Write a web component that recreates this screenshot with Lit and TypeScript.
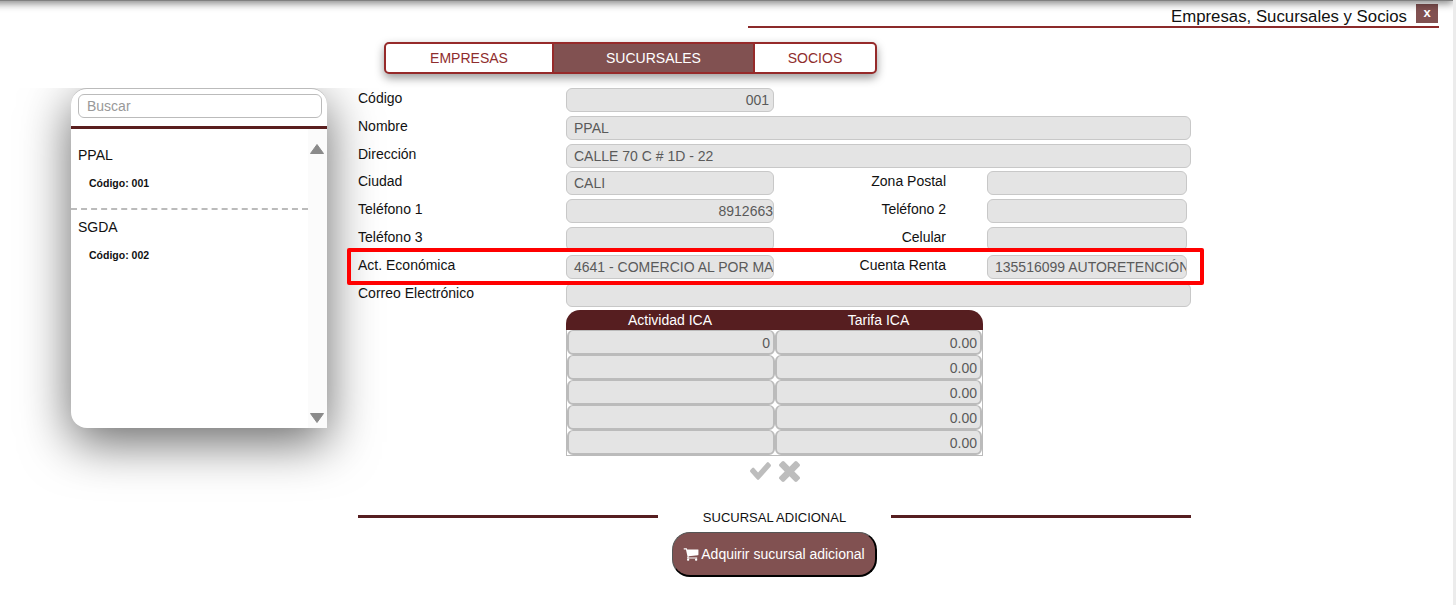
import { LitElement, html, css, svg } from "lit";
import { customElement } from "lit/decorators.js";

const CHECK = "M1671 566q0 40-28 68l-724 724-136 136q-28 28-68 28t-68-28l-136-136-362-362q-28-28-28-68t28-68l136-136q28-28 68-28t68 28l294 295 656-657q28-28 68-28t68 28l136 136q28 28 28 68z";
const TIMES = "M1298 1202q0 40-28 68l-136 136q-28 28-68 28t-68-28l-294-294-294 294q-28 28-68 28t-68-28l-136-136q-28-28-28-68t28-68l294-294-294-294q-28-28-28-68t28-68l136-136q28-28 68-28t68 28l294 294 294-294q28-28 68-28t68 28l136 136q28 28 28 68t-28 68l-294 294 294 294q28 28 28 68z";
const CART = "M704 1536q0 52-38 90t-90 38-90-38-38-90 38-90 90-38 90 38 38 90zm896 0q0 52-38 90t-90 38-90-38-38-90 38-90 90-38 90 38 38 90zm128-1088v512q0 24-16.5 42.5t-40.5 21.5l-1044 122q13 60 13 70 0 16-24 64h920q26 0 45 19t19 45-19 45-45 19h-1024q-26 0-45-19t-19-45q0-11 8-31.5t16-36 21.5-40 15.5-29.5l-177-823h-204q-26 0-45-19t-19-45 19-45 45-19h256q16 0 28.5 6.5t19.5 15.5 13 24.5 8 26 5.5 29.5 4.5 26h1201q26 0 45 19t19 45z";

@customElement("app-root")
export class AppRoot extends LitElement {
  static styles = css`
    :host {
      display: block;
      position: relative;
      height: 605px;
      overflow: hidden;
      background: #fff;
      font-family: "Liberation Sans", Arial, sans-serif;
      font-size: 14px;
      color: #111;
    }
    * { box-sizing: border-box; }
    .topshadow {
      position: absolute;
      left: -20px;
      top: -8px;
      width: 1473px;
      height: 9px;
      background: #808080;
      box-shadow: 0 2px 9px rgba(0, 0, 0, 0.55);
    }
    .edge {
      position: absolute;
      right: 0;
      top: 0;
      bottom: 0;
      width: 3px;
      background: #ececec;
    }
    .header {
      display: flex;
      justify-content: flex-end;
      align-items: flex-start;
      gap: 9px;
      width: 691px;
      height: 28px;
      margin-left: 748px;
      padding-right: 1px;
      border-bottom: 2px solid #8b2a2a;
    }
    .title { font-size: 16.8px; line-height: 19px; margin-top: 7px; }
    .close {
      width: 22px;
      height: 19px;
      margin-top: 4px;
      background: #815151;
      color: #fff;
      font-size: 13px;
      font-weight: bold;
      text-align: center;
      line-height: 17px;
    }
    .tabs {
      display: grid;
      grid-template-columns: 168px 201px 120px;
      width: 493px;
      height: 32px;
      margin: 14px 0 0 384px;
      border: 2px solid #962a2a;
      border-radius: 5px;
      box-shadow: 0 4px 10px rgba(0, 0, 0, 0.4);
      overflow: hidden;
      background: #fff;
    }
    .tab {
      display: flex;
      align-items: center;
      justify-content: center;
      color: #8f2d2d;
      border-right: 2px solid #962a2a;
    }
    .tab:last-child { border-right: 0; }
    .tab.on { background: #815151; color: #fff; }
    .main {
      display: flex;
      align-items: flex-start;
      margin-top: 14px;
    }
    .sideclip {
      margin: 0 31px 0 71px;
      clip-path: inset(0 -100px -100px -100px);
      flex: none;
    }
    .side {
      width: 256px;
      height: 340px;
      background: #fff;
      border-radius: 16px 16px 0 16px;
      border-top: 1px solid #bbb;
      box-shadow: 0 14px 50px rgba(0, 0, 0, 0.6);
      overflow: hidden;
    }
    .search {
      height: 24px;
      margin: 5px 5px 0 7px;
      border: 1px solid #bbb;
      border-radius: 6px;
      padding-left: 8px;
      line-height: 22px;
      color: #999;
    }
    .bar { height: 3px; background: #5a1e1e; margin-top: 8px; }
    .list {
      display: flex;
      height: 299px;
    }
    .items { width: 237px; padding-top: 18px; }
    .item { padding-left: 7px; height: 71px; }
    .name { line-height: 17px; }
    .code { font-size: 10.5px; font-weight: bold; margin: 13px 0 0 11px; line-height: 13px; }
    .dash { border-top: 2px dashed #bbb; margin-top: -1px; height: 0; position: relative; top: -9px; }
    .scroll {
      flex: 1;
      background: #fbfbfb;
      display: flex;
      flex-direction: column;
      justify-content: space-between;
      align-items: flex-end;
      padding: 15px 3px 5px 0;
    }
    .scroll svg { display: block; }
    .form { width: 833px; flex: none; position: relative; }
    .rows { display: grid; row-gap: 3.8px; }
    .row {
      display: grid;
      grid-template-columns: 208px 208px 172px 241px;
      height: 24px;
    }
    .row.full { grid-template-columns: 208px 625px; }
    .lab { line-height: 16px; margin-top: 2px; }
    .lab.r { text-align: right; }
    .inp {
      height: 24px;
      background: #e4e4e4;
      border: 1px solid #c8c8c8;
      border-radius: 6px;
      padding: 0 7px;
      line-height: 23px;
      color: #5a5a5a;
      white-space: nowrap;
      overflow: hidden;
    }
    .inp.num { text-align: right; }
    .inp.num.code3 { padding-right: 4px; }
    .inp.num.tel { padding-right: 0; }
    .inp.second { margin-left: 41px; }
    .table {
      width: 417px;
      margin: 3.4px 0 0 208px;
    }
    .thead {
      display: grid;
      grid-template-columns: 208px 209px;
      height: 20px;
      background: #561e20;
      border-radius: 14px 14px 0 0;
      color: #fff;
      text-align: center;
      line-height: 20px;
    }
    .tbody {
      display: grid;
      grid-template-columns: 208px 207px;
      border: 1px solid #bbb;
      border-top: 0;
      background: #fff;
    }
    .cell {
      height: 25px;
      background: #e4e4e4;
      border: 2px solid #bbb;
      border-top-width: 1px;
      border-radius: 6px;
      text-align: right;
      line-height: 25px;
      padding-right: 3px;
      color: #5a5a5a;
    }
    .actions {
      display: flex;
      justify-content: center;
      gap: 8px;
      margin-top: 5px;
      height: 21px;
      align-items: center;
    }
    .actions svg { fill: #bdbdbd; display: block; }
    .extra {
      display: flex;
      align-items: center;
      margin-top: 27px;
      font-size: 13px;
    }
    .extra .ln { height: 3px; background: #561e20; flex: 0 0 300px; }
    .extra .tx { flex: 1; text-align: center; line-height: 14px; margin-top: 2px; }
    .buy {
      display: flex;
      align-items: center;
      justify-content: center;
      width: 205px;
      height: 45px;
      margin: 7px 0 0 314px;
      background: #815151;
      border-radius: 18px;
      border-style: solid;
      border-width: 1px 2px 2px 1px;
      border-color: #555 #000 #000 #555;
      color: #fff;
      white-space: nowrap;
      gap: 2px;
    }
    .buy svg { fill: #fff; display: block; }
    .redbox {
      position: absolute;
      left: 347px;
      top: 248px;
      width: 857px;
      height: 37px;
      border: 4px solid #ff0000;
      border-radius: 2px;
    }
  `;

  private row(l1: string, v1: string, l2: string, v2: string, cls = "") {
    return html`<div class="row">
      <div class="lab">${l1}</div>
      <div class="inp ${cls}">${v1}</div>
      <div class="lab r">${l2}</div>
      <div class="inp second">${v2}</div>
    </div>`;
  }

  private full(l: string, v: string) {
    return html`<div class="row full">
      <div class="lab">${l}</div>
      <div class="inp">${v}</div>
    </div>`;
  }

  render() {
    const table = [["0", "0.00"], ["", "0.00"], ["", "0.00"], ["", "0.00"], ["", "0.00"]];
    return html`
      <div class="topshadow"></div>
      <div class="edge"></div>
      <div class="header">
        <div class="title">Empresas, Sucursales y Socios</div>
        <div class="close">x</div>
      </div>
      <div class="tabs">
        <div class="tab">EMPRESAS</div>
        <div class="tab on">SUCURSALES</div>
        <div class="tab">SOCIOS</div>
      </div>
      <div class="main">
        <div class="sideclip">
          <div class="side">
            <div class="search">Buscar</div>
            <div class="bar"></div>
            <div class="list">
              <div class="items">
                <div class="item">
                  <div class="name">PPAL</div>
                  <div class="code">Código: 001</div>
                </div>
                <div class="dash"></div>
                <div class="item">
                  <div class="name">SGDA</div>
                  <div class="code">Código: 002</div>
                </div>
              </div>
              <div class="scroll">
                <svg width="14" height="10" viewBox="0 0 14 10"><path d="M7 0.5 L13.5 9.5 H0.5 Z" fill="#8a8a8a" stroke="#8a8a8a" stroke-linejoin="round"/></svg>
                <svg width="14" height="10" viewBox="0 0 14 10"><path d="M0.5 0.5 H13.5 L7 9.5 Z" fill="#8a8a8a" stroke="#8a8a8a" stroke-linejoin="round"/></svg>
              </div>
            </div>
          </div>
        </div>
        <div class="form">
          <div class="rows">
            <div class="row">
              <div class="lab">Código</div>
              <div class="inp num code3">001</div>
            </div>
            ${this.full("Nombre", "PPAL")}
            ${this.full("Dirección", "CALLE 70 C # 1D - 22")}
            ${this.row("Ciudad", "CALI", "Zona Postal", "")}
            ${this.row("Teléfono 1", "8912663", "Teléfono 2", "", "num tel")}
            ${this.row("Teléfono 3", "", "Celular", "")}
            ${this.row("Act. Económica", "4641 - COMERCIO AL POR MAYOR", "Cuenta Renta", "135516099 AUTORETENCIÓN")}
            ${this.full("Correo Electrónico", "")}
          </div>
          <div class="table">
            <div class="thead"><div>Actividad ICA</div><div>Tarifa ICA</div></div>
            <div class="tbody">
              ${table.map((r) => html`<div class="cell">${r[0]}</div><div class="cell">${r[1]}</div>`)}
            </div>
          </div>
          <div class="actions">
            <svg width="21" height="18" viewBox="121 334 1550 1188" preserveAspectRatio="none">${svg`<path d=${CHECK} />`}</svg>
            <svg width="21" height="21" viewBox="110 246 1188 1188">${svg`<path d=${TIMES} />`}</svg>
          </div>
          <div class="extra">
            <div class="ln"></div>
            <div class="tx">SUCURSAL ADICIONAL</div>
            <div class="ln"></div>
          </div>
          <div class="buy">
            <svg width="16" height="16" viewBox="0 0 1792 1792">${svg`<path d=${CART} />`}</svg>
            <span>Adquirir sucursal adicional</span>
          </div>
        </div>
      </div>
      <div class="redbox"></div>
    `;
  }
}
